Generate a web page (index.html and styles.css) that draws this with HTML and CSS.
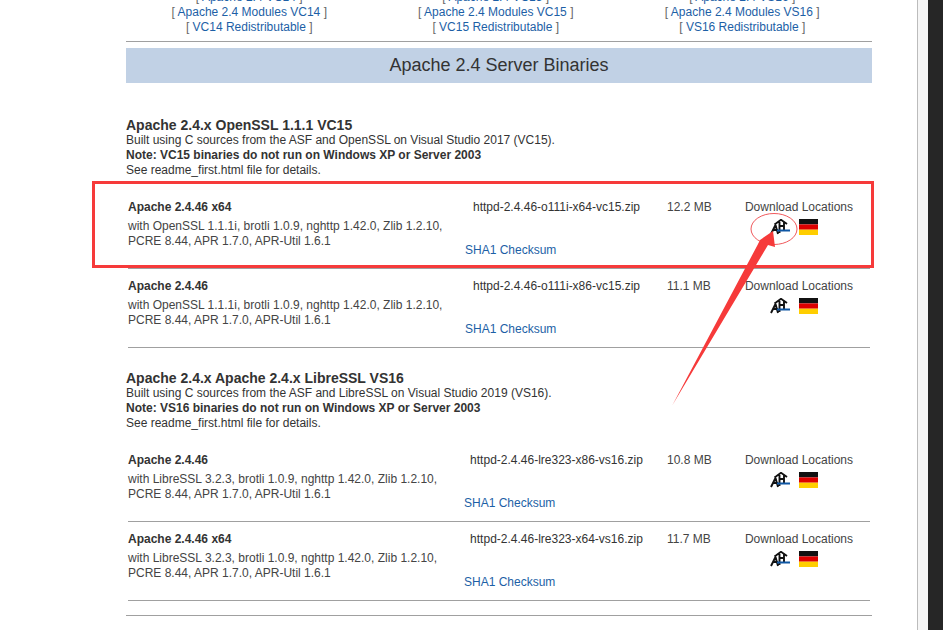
FILE: index.html
```html
<!DOCTYPE html>
<html lang="en">
<head>
<meta charset="utf-8">
<title>Apache 2.4 Server Binaries</title>
<link rel="stylesheet" href="styles.css">
</head>
<body>
<svg width="0" height="0" class="defs">
  <defs>
    <symbol id="mirror" viewBox="0 0 20 16">
      <path d="M4.5 5.5 11 .8 17 5M1 15 5.5 6 8 15M3 11H8M9.5 3V14M14 3V11M9.5 7H14" fill="none" stroke="#111" stroke-width="1.9"/>
      <rect x="7" y="10.5" width="13" height="2" fill="#0f57a4"/>
    </symbol>
    <symbol id="flag" viewBox="0 0 19 16">
      <rect width="19" height="5.4" fill="#111"/>
      <rect y="5.4" width="19" height="5.3" fill="#dd0000"/>
      <rect y="10.7" width="19" height="5.3" fill="#ffce00"/>
    </symbol>
  </defs>
</svg>
<main class="page">
  <div class="links">
    <div class="links-col">
      <div>[ <a href="#">Apache 2.4 VC14</a> ]</div>
      <div>[ <a href="#">Apache 2.4 Modules VC14</a> ]</div>
      <div>[ <a href="#">VC14 Redistributable</a> ]</div>
    </div>
    <div class="links-col">
      <div>[ <a href="#">Apache 2.4 VC15</a> ]</div>
      <div>[ <a href="#">Apache 2.4 Modules VC15</a> ]</div>
      <div>[ <a href="#">VC15 Redistributable</a> ]</div>
    </div>
    <div class="links-col">
      <div>[ <a href="#">Apache 2.4 VS16</a> ]</div>
      <div>[ <a href="#">Apache 2.4 Modules VS16</a> ]</div>
      <div>[ <a href="#">VS16 Redistributable</a> ]</div>
    </div>
  </div>
  <hr class="rule rule-top">
  <h2 class="banner">Apache 2.4 Server Binaries</h2>

  <section class="section section-first">
    <h3 class="section-title">Apache 2.4.x OpenSSL 1.1.1 VC15</h3>
    <p class="section-text">Built using C sources from the ASF and OpenSSL on Visual Studio 2017 (VC15).<br>
    <strong>Note: VC15 binaries do not run on Windows XP or Server 2003</strong><br>
    See readme_first.html file for details.</p>
  </section>

  <div class="row">
    <div class="info">
      <strong class="name">Apache 2.4.46 x64</strong>
      <p class="desc">with OpenSSL 1.1.1i, brotli 1.0.9, nghttp 1.42.0, Zlib 1.2.10,<br>PCRE 8.44, APR 1.7.0, APR-Util 1.6.1</p>
    </div>
    <div class="file">
      <a class="file-name" href="#">httpd-2.4.46-o111i-x64-vc15.zip</a>
      <a class="sha" href="#">SHA1 Checksum</a>
    </div>
    <div class="size">12.2 MB</div>
    <div class="dl">
      <span>Download Locations</span>
      <div class="mirrors">
        <svg class="icon-mirror"><use href="#mirror"/></svg>
        <svg class="icon-flag"><use href="#flag"/></svg>
      </div>
    </div>
  </div>

  <div class="row">
    <div class="info">
      <strong class="name">Apache 2.4.46</strong>
      <p class="desc">with OpenSSL 1.1.1i, brotli 1.0.9, nghttp 1.42.0, Zlib 1.2.10,<br>PCRE 8.44, APR 1.7.0, APR-Util 1.6.1</p>
    </div>
    <div class="file">
      <a class="file-name" href="#">httpd-2.4.46-o111i-x86-vc15.zip</a>
      <a class="sha" href="#">SHA1 Checksum</a>
    </div>
    <div class="size">11.1 MB</div>
    <div class="dl">
      <span>Download Locations</span>
      <div class="mirrors">
        <svg class="icon-mirror"><use href="#mirror"/></svg>
        <svg class="icon-flag"><use href="#flag"/></svg>
      </div>
    </div>
  </div>

  <section class="section section-next">
    <h3 class="section-title">Apache 2.4.x Apache 2.4.x LibreSSL VS16</h3>
    <p class="section-text">Built using C sources from the ASF and LibreSSL on Visual Studio 2019 (VS16).<br>
    <strong>Note: VS16 binaries do not run on Windows XP or Server 2003</strong><br>
    See readme_first.html file for details.</p>
  </section>

  <div class="row row-libre">
    <div class="info">
      <strong class="name">Apache 2.4.46</strong>
      <p class="desc">with LibreSSL 3.2.3, brotli 1.0.9, nghttp 1.42.0, Zlib 1.2.10,<br>PCRE 8.44, APR 1.7.0, APR-Util 1.6.1</p>
    </div>
    <div class="file">
      <a class="file-name" href="#">httpd-2.4.46-lre323-x86-vs16.zip</a>
      <a class="sha" href="#">SHA1 Checksum</a>
    </div>
    <div class="size">10.8 MB</div>
    <div class="dl">
      <span>Download Locations</span>
      <div class="mirrors">
        <svg class="icon-mirror"><use href="#mirror"/></svg>
        <svg class="icon-flag"><use href="#flag"/></svg>
      </div>
    </div>
  </div>

  <div class="row row-libre">
    <div class="info">
      <strong class="name">Apache 2.4.46 x64</strong>
      <p class="desc">with LibreSSL 3.2.3, brotli 1.0.9, nghttp 1.42.0, Zlib 1.2.10,<br>PCRE 8.44, APR 1.7.0, APR-Util 1.6.1</p>
    </div>
    <div class="file">
      <a class="file-name" href="#">httpd-2.4.46-lre323-x64-vs16.zip</a>
      <a class="sha" href="#">SHA1 Checksum</a>
    </div>
    <div class="size">11.7 MB</div>
    <div class="dl">
      <span>Download Locations</span>
      <div class="mirrors">
        <svg class="icon-mirror"><use href="#mirror"/></svg>
        <svg class="icon-flag"><use href="#flag"/></svg>
      </div>
    </div>
  </div>

  <hr class="rule rule-end">
</main>
<aside class="scrollbar"><div class="scroll-track"></div><div class="scroll-thumb"></div></aside>

<svg class="markup" width="943" height="630" viewBox="0 0 943 630">
  <rect x="93.5" y="182.5" width="779" height="84" fill="none" stroke="#f63a3a" stroke-width="3"/>
  <ellipse cx="774" cy="229" rx="23" ry="15.5" fill="none" stroke="#f0595c" stroke-width="1"/>
  <polygon points="672.5,405 757,246 760,240 773,231 775,247 768,245" fill="#f63a3a"/>
</svg>
</body>
</html>
```

FILE: styles.css
```css
* {
  box-sizing: border-box;
}

html,
body {
  margin: 0;
  height: 630px;
  overflow: hidden;
  background: #fff;
}

body {
  display: flex;
  position: relative;
  font-family: "Liberation Sans", Arial, sans-serif;
  font-size: 12px;
  line-height: 15px;
  color: #333;
}

.defs {
  position: absolute;
}

.page {
  width: 917px;
  flex: none;
  height: 630px;
  overflow: hidden;
  padding: 0 45px 0 126px;
}

a {
  color: #1d5fa6;
  text-decoration: none;
}

.links {
  display: grid;
  grid-template-columns: repeat(3, 246.5px);
  margin-top: -10px;
  color: #666;
  text-align: center;
  line-height: 15px;
}

.rule {
  border: 0;
  height: 1px;
  background: #a0a0a0;
  margin: 0;
}

.rule-top {
  margin-top: 6px;
}

.rule-end {
  margin-top: 14px;
}

.banner {
  margin: 6px 0 0;
  height: 35px;
  background: #c1d1e5;
  font-size: 18px;
  font-weight: 400;
  line-height: 34px;
  text-align: center;
  color: #333;
}

.section-first {
  margin-top: 34px;
  margin-bottom: 12px;
}

.section-next {
  margin-top: 22px;
  margin-bottom: 12px;
}

.section-title {
  margin: 0;
  font-size: 14px;
  line-height: 16px;
  font-weight: 700;
  color: #333;
}

.section-text {
  margin: 0;
}

.row {
  display: grid;
  grid-template-columns: 332px 200px 70px 138px;
  margin: 0 2px;
  height: 79px;
  padding: 10px 0 9px;
  border-bottom: 1px solid #a0a0a0;
}

.name {
  display: block;
  color: #333;
}

.desc {
  margin: 4px 0 0;
  color: #444;
}

.file {
  display: flex;
  flex-direction: column;
  justify-content: space-between;
}

.file-name {
  text-align: center;
  padding-right: 7px;
  color: #333;
}

.sha {
  padding-left: 5px;
  margin-bottom: 1px;
}

.row-libre .sha {
  padding-left: 4px;
}

.size {
  padding-left: 7px;
  color: #444;
}

.dl {
  text-align: center;
  color: #444;
}

.mirrors {
  display: flex;
  justify-content: center;
  gap: 9px;
  margin-top: 4px;
  padding-right: 11px;
}

.icon-mirror {
  width: 20px;
  height: 16px;
}

.icon-flag {
  width: 19px;
  height: 16px;
}

.scrollbar {
  flex: 1;
  display: flex;
  height: 630px;
}

.scroll-track {
  width: 11px;
  background: #f6f6f6;
  border-left: 1px solid #bcbcbc;
}

.scroll-thumb {
  flex: 1;
  background: #262626;
}

.markup {
  position: absolute;
  left: 0;
  top: 0;
  pointer-events: none;
}
```
